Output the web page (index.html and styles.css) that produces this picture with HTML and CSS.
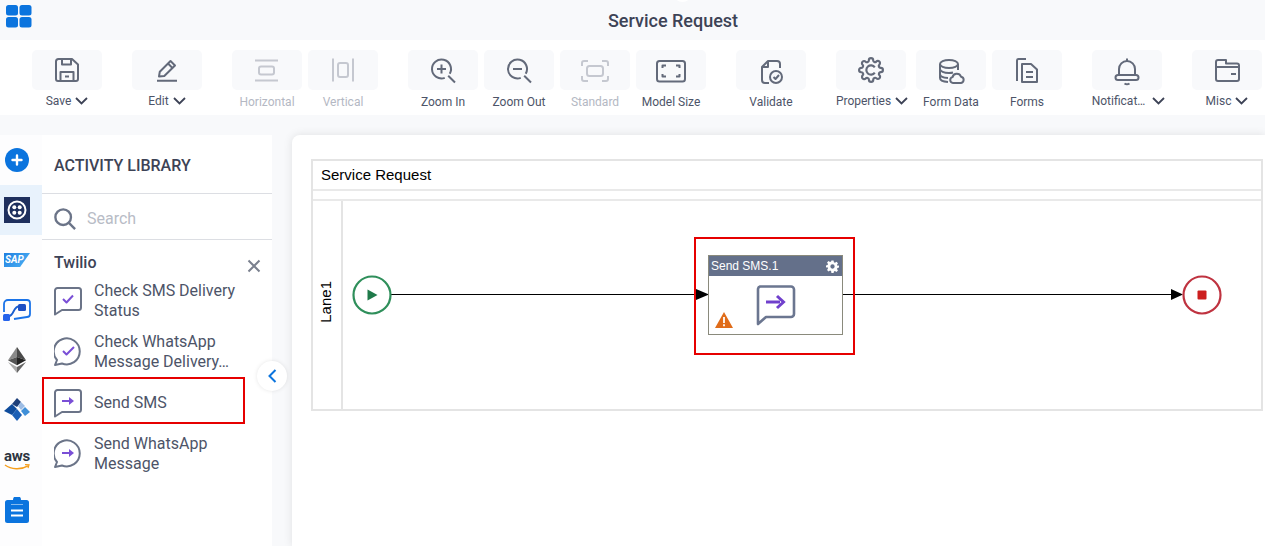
FILE: index.html
```html
<!DOCTYPE html>
<html lang="en">
<head>
    <meta charset="UTF-8">
    <meta name="viewport" content="width=device-width, initial-scale=1.0">
    <title>Service Request</title>
    <link rel="stylesheet" href="styles.css">
</head>
<body>
    <div class="topbar">
        <svg class="apps-icon" width="26" height="23" viewBox="0 0 26 23"><rect x="0" y="0" width="12" height="10.5" rx="2.5"/><rect x="13.5" y="0" width="12" height="10.5" rx="2.5"/><rect x="0" y="12" width="12" height="10.5" rx="2.5"/><rect x="13.5" y="12" width="12" height="10.5" rx="2.5"/></svg>
        <span class="notch"></span>
        <h1>Service Request</h1>
    </div>

    <div class="toolbar">
        <div class="tool-group">
            <div class="tool">
                <div class="tool-btn"><svg class="ico" viewBox="0 0 26 26"><path d="M4.500 2H18l6 5.500V22a2 2 0 0 1-2 2H4a2 2 0 0 1-2-2V4.500A2.500 2.500 0 0 1 4.500 2z"/><path d="M8 2v5.500h9V2M6.500 24v-9h13v9M11 19.500h4"/></svg></div>
                <div class="tool-label drop">Save <svg class="chev" viewBox="0 0 13 8"><path d="M1 1l5.500 5.500L12 1"/></svg></div>
            </div>
        </div>
        <div class="tool-group">
            <div class="tool">
                <div class="tool-btn"><svg class="ico" viewBox="0 0 26 26"><path d="M5 19.500l.8-4.800L16.500 4l4.500 4.500L10.300 19z"/><path d="M14 6.500l4.500 4.500M3 23.800h20"/></svg></div>
                <div class="tool-label drop">Edit <svg class="chev" viewBox="0 0 13 8"><path d="M1 1l5.500 5.500L12 1"/></svg></div>
            </div>
        </div>
        <div class="tool-group">
            <div class="tool off">
                <div class="tool-btn"><svg class="ico" viewBox="0 0 26 26"><path d="M1 3.500h23M1 23.500h23"/><rect x="5" y="9.500" width="15" height="8" rx="2"/></svg></div>
                <div class="tool-label">Horizontal</div>
            </div>
            <div class="tool off">
                <div class="tool-btn"><svg class="ico" viewBox="0 0 26 26"><path d="M3 1.500v23M23 1.500v23"/><rect x="8" y="6" width="10" height="14" rx="2"/></svg></div>
                <div class="tool-label">Vertical</div>
            </div>
        </div>
        <div class="tool-group">
            <div class="tool">
                <div class="tool-btn"><svg class="ico" viewBox="0 0 26 26"><path d="M14.750 20.930A9.500 9.500 0 1 1 19.730 16.750M18.200 18.700l6.800 6.800M11.500 7.500v9M7 12h9"/></svg></div>
                <div class="tool-label">Zoom In</div>
            </div>
            <div class="tool">
                <div class="tool-btn"><svg class="ico" viewBox="0 0 26 26"><path d="M14.750 20.930A9.500 9.500 0 1 1 19.730 16.750M18.200 18.700l6.800 6.800M7 12h9"/></svg></div>
                <div class="tool-label">Zoom Out</div>
            </div>
            <div class="tool off">
                <div class="tool-btn"><svg class="ico" viewBox="0 0 26 26"><path d="M0 9V6a2 2 0 0 1 2-2h4M20 4h4a2 2 0 0 1 2 2v3M26 19v3a2 2 0 0 1-2 2h-4M6 24H2a2 2 0 0 1-2-2v-3"/><rect x="5" y="9" width="16" height="10" rx="2.500"/></svg></div>
                <div class="tool-label">Standard</div>
            </div>
            <div class="tool">
                <div class="tool-btn"><svg class="ico" viewBox="0 0 26 26"><rect x="-1" y="4" width="28" height="20.500" rx="2.500"/><path d="M4.500 11V8.500H8M18 8.500h3.500V11M21.500 17v2.500H18M8 19.500H4.500V17"/></svg></div>
                <div class="tool-label">Model Size</div>
            </div>
        </div>
        <div class="tool-group">
            <div class="tool">
                <div class="tool-btn"><svg class="ico" viewBox="0 0 26 26"><path d="M22 11V7a3 3 0 0 0-3-3h-9L4 10v13a3 3 0 0 0 3 3h4M10 4v6H4"/><circle cx="18" cy="20" r="6"/><path d="M15.500 20l2 2 3.500-4"/></svg></div>
                <div class="tool-label">Validate</div>
            </div>
        </div>
        <div class="tool-group">
            <div class="tool tool-wide">
                <div class="tool-btn"><svg class="ico" viewBox="0 0 24 24"><path d="M19.400 15a1.650 1.650 0 0 0 .33 1.820l.06.06a2 2 0 0 1 0 2.830 2 2 0 0 1-2.830 0l-.06-.06a1.650 1.650 0 0 0-1.820-.33 1.650 1.650 0 0 0-1 1.510V21a2 2 0 0 1-2 2 2 2 0 0 1-2-2v-.09A1.650 1.650 0 0 0 9 19.400a1.650 1.650 0 0 0-1.820.33l-.06.06a2 2 0 0 1-2.830 0 2 2 0 0 1 0-2.830l.06-.06a1.650 1.650 0 0 0 .33-1.820 1.650 1.650 0 0 0-1.510-1H3a2 2 0 0 1-2-2 2 2 0 0 1 2-2h.09A1.650 1.650 0 0 0 4.600 9a1.650 1.650 0 0 0-.33-1.820l-.06-.06a2 2 0 0 1 0-2.830 2 2 0 0 1 2.830 0l.06.06a1.650 1.650 0 0 0 1.820.33H9a1.650 1.650 0 0 0 1-1.510V3a2 2 0 0 1 2-2 2 2 0 0 1 2 2v.09a1.650 1.650 0 0 0 1 1.510 1.650 1.650 0 0 0 1.820-.33l.06-.06a2 2 0 0 1 2.830 0 2 2 0 0 1 0 2.830l-.06.06a1.650 1.650 0 0 0-.33 1.820V9a1.650 1.650 0 0 0 1.510 1H21a2 2 0 0 1 2 2 2 2 0 0 1-2 2h-.09a1.650 1.650 0 0 0-1.510 1z"/><path d="M15.500 9.500a4.300 4.300 0 1 0 0 5"/></svg></div>
                <div class="tool-label drop">Properties <svg class="chev" viewBox="0 0 13 8"><path d="M1 1l5.500 5.500L12 1"/></svg></div>
            </div>
            <div class="tool">
                <div class="tool-btn"><svg class="ico" viewBox="0 0 26 26"><ellipse cx="11" cy="7" rx="9" ry="4"/><path d="M2 7v14c0 2 3 3.600 8 4M20 7v6M2 12c0 2.200 4 4 9 4 1.500 0 3-.2 4-.5M2 17c0 2.200 3.500 3.800 8 4"/><path class="fill" d="M15 26a3 3 0 0 1-.5-5.900 4.500 4.500 0 0 1 8.500-.4A3.200 3.200 0 0 1 23 26z"/></svg></div>
                <div class="tool-label">Form Data</div>
            </div>
            <div class="tool">
                <div class="tool-btn"><svg class="ico" viewBox="0 0 26 26"><path d="M3 24V3.500a1.500 1.500 0 0 1 1.500-1.500H12"/><path d="M8 7h9l6 5.500V25H8z"/><path d="M12 15h7M12 20h7"/></svg></div>
                <div class="tool-label">Forms</div>
            </div>
        </div>
        <div class="tool-group">
            <div class="tool">
                <div class="tool-btn"><svg class="ico" viewBox="0 0 26 26"><path d="M13 1.500v3M5 18v-6a8 8 0 0 1 16 0v6"/><rect x="1.500" y="18" width="23" height="5" rx="2.500"/><path d="M10.500 26.500c1.500 1 3.500 1 5 0"/></svg></div>
                <div class="tool-label drop notif">Notificat… <svg class="chev" viewBox="0 0 13 8"><path d="M1 1l5.500 5.500L12 1"/></svg></div>
            </div>
        </div>
        <div class="tool-group">
            <div class="tool">
                <div class="tool-btn"><svg class="ico" viewBox="0 0 26 26"><path d="M2 10V5a2 2 0 0 1 2-2h8v3.500h11a2 2 0 0 1 2 2V22a2 2 0 0 1-2 2H4a2 2 0 0 1-2-2z"/><path d="M2 10h23M17 17h5"/></svg></div>
                <div class="tool-label drop">Misc <svg class="chev" viewBox="0 0 13 8"><path d="M1 1l5.500 5.500L12 1"/></svg></div>
            </div>
        </div>
    </div>

    <div class="main">
        <div class="rail">
            <div class="rail-item">
                <svg width="24" height="24" viewBox="0 0 24 24"><circle cx="12" cy="12" r="12" fill="#0b74de"/><path d="M12 7.500v9M7.500 12h9" stroke="#fff" stroke-width="2.400" stroke-linecap="round"/></svg>
            </div>
            <div class="rail-item active">
                <svg width="26" height="26" viewBox="0 0 26 26"><rect width="26" height="26" fill="#1e2f5d"/><circle cx="13" cy="13" r="8.500" fill="none" stroke="#fff" stroke-width="2"/><circle cx="10.300" cy="10.300" r="2" fill="#fff"/><circle cx="15.700" cy="10.300" r="2" fill="#fff"/><circle cx="10.300" cy="15.700" r="2" fill="#fff"/><circle cx="15.700" cy="15.700" r="2" fill="#fff"/></svg>
            </div>
            <div class="rail-item">
                <div class="sap">SAP</div>
            </div>
            <div class="rail-item">
                <svg width="30" height="24" viewBox="0 0 30 24" fill="none"><path d="M2 14V6a4 4 0 0 1 4-4h19a3 3 0 0 1 3 3v11a3 3 0 0 1-3 3l-13 2" stroke="#1a73e8" stroke-width="1.800"/><path d="M7 18c5 0 4-10 11-10" stroke="#1a5fd0" stroke-width="2"/><rect x="1" y="16" width="7" height="7" rx="1.500" fill="#2563eb"/><rect x="16" y="6" width="8" height="7" rx="1.500" fill="#1d4fc4"/></svg>
            </div>
            <div class="rail-item">
                <svg width="18" height="26" viewBox="0 0 18 26"><path d="M9 0L0 13.200 9 10z" fill="#8a8a8a"/><path d="M9 0l9 13.200L9 10z" fill="#4a4a4a"/><path d="M0 13.200L9 10v8.200z" fill="#555"/><path d="M18 13.200L9 10v8.200z" fill="#222"/><path d="M0 15l9 11v-6z" fill="#aaa"/><path d="M18 15L9 26v-6z" fill="#666"/></svg>
            </div>
            <div class="rail-item">
                <svg width="26" height="24" viewBox="0 0 26 24"><path d="M0 13l8-7 5 5-5 6z" fill="#0f4c9c"/><path d="M8 17l5-6 5 6-5 6z" fill="#1b5fb5"/><path d="M8 6l5-6 4 4-4 5z" fill="#1d3f7a"/><path d="M17 4l4 4-4 4-3-4z" fill="#9dbce4"/><path d="M21 9l5 5-5 4-4-5z" fill="#3f8fd8"/></svg>
            </div>
            <div class="rail-item">
                <div class="aws">
                    <span>aws</span>
                    <svg width="26" height="7" viewBox="0 0 26 7" fill="none"><path d="M1 1c6 4.500 16 5 23 .8" stroke="#f59e1b" stroke-width="1.500"/><path d="M21 .6l4 .2-1 3.400" stroke="#f59e1b" stroke-width="1.200"/></svg>
                </div>
            </div>
            <div class="rail-item">
                <svg width="24" height="26" viewBox="0 0 24 26"><path d="M2.500 3H8a4 4 0 0 1 8 0h5.500A2.500 2.500 0 0 1 24 5.500v18a2.500 2.500 0 0 1-2.500 2.500h-19A2.500 2.500 0 0 1 0 23.500v-18A2.500 2.500 0 0 1 2.500 3z" fill="#0b74de"/><path d="M6 7.500h12" stroke="#fff" stroke-width="1" opacity=".5"/><path d="M6 13.500h12M6 18.500h12" stroke="#fff" stroke-width="2.200"/></svg>
            </div>
        </div>

        <div class="library">
            <div class="library-head">ACTIVITY LIBRARY</div>
            <div class="search">
                <svg width="22" height="22" viewBox="0 0 24 24" fill="none" stroke="#6b7488" stroke-width="2.600"><circle cx="10" cy="10" r="8.500"/><path d="M16 16l7 7"/></svg>
                <span>Search</span>
            </div>
            <div class="group-head">
                <span>Twilio</span>
                <svg width="14" height="14" viewBox="0 0 14 14" stroke="#7a808e" stroke-width="2"><path d="M1.500 1.500l11 11M12.500 1.500l-11 11"/></svg>
            </div>
            <div class="items">
                <div class="item">
                    <svg class="bubble" viewBox="0 0 28 30"><path d="M3.500 2h21A2.500 2.500 0 0 1 27 4.500v17a2.500 2.500 0 0 1-2.500 2.500H8l-7 4.500V4.500A2.500 2.500 0 0 1 3.500 2z"/><path class="accent" d="M9 13l3.500 3.500L19 9.500"/></svg>
                    <span>Check SMS Delivery Status</span>
                </div>
                <div class="item">
                    <svg class="bubble" viewBox="0 0 28 30"><path d="M3 23A13 13 0 1 1 8 26.500L1 28z"/><path class="accent" d="M9 14l3.500 3.500L20 10"/></svg>
                    <span>Check WhatsApp Message Delivery…</span>
                </div>
                <div class="item picked">
                    <svg class="bubble" viewBox="0 0 28 30"><path d="M3.500 2h21A2.500 2.500 0 0 1 27 4.500v17a2.500 2.500 0 0 1-2.500 2.500H8l-7 4.500V4.500A2.500 2.500 0 0 1 3.500 2z"/><path class="accent" d="M8 13h10"/><path class="accent-head" d="M15 9l5 4-5 4z"/></svg>
                    <span>Send SMS</span>
                </div>
                <div class="item">
                    <svg class="bubble" viewBox="0 0 28 30"><path d="M3 23A13 13 0 1 1 8 26.500L1 28z"/><path class="accent" d="M8 14h10"/><path class="accent-head" d="M15 10l5 4-5 4z"/></svg>
                    <span>Send WhatsApp Message</span>
                </div>
            </div>
            <div class="collapse-btn">
                <svg width="9" height="14" viewBox="0 0 9 14" fill="none" stroke="#0b74de" stroke-width="2"><path d="M7.500 1L1.500 7l6 6"/></svg>
            </div>
        </div>

        <div class="canvas">
            <div class="pool">
                <div class="pool-title">Service Request</div>
                <div class="pool-gap"></div>
                <div class="lane">
                    <div class="lane-label"><span>Lane1</span></div>
                    <div class="lane-body">
                        <svg class="wires" width="920" height="208">
                            <path d="M47 93.500H354M500 93.500H829" stroke="#000" fill="none"/>
                            <path d="M353 88l13 5.500-13 5.500zM828 88l12 5.500-12 5.500z" fill="#000"/>
                        </svg>
                        <div class="event start">
                            <svg width="40" height="40" viewBox="0 0 40 40"><circle cx="20" cy="20" r="18.500" fill="#fff" stroke="#2f8f5b" stroke-width="2.200"/><path d="M15.500 14.500l10 5.500-10 5.500z" fill="#1f7a4a"/></svg>
                        </div>
                        <div class="task">
                            <div class="task-head">
                                <span>Send SMS.1</span>
                                <svg width="13" height="13" viewBox="0 0 24 24"><path fill="#fff" fill-rule="evenodd" d="M10 1h4l.6 3.200 2 .8L19.300 3.200l2.800 2.800L20.300 8.700l.8 2L24 10v4l-2.900.6-.8 2 1.800 2.700-2.800 2.800-2.700-1.800-2 .8L14 24h-4l-.6-3.900-2-.8-2.700 1.800-2.800-2.800 1.800-2.700-.8-2L0 14v-4l2.900-.6.8-2L1.900 4.700 4.700 1.900l2.700 1.800 2-.8zM12 8a4 4 0 1 0 0 8 4 4 0 0 0 0-8z"/></svg>
                            </div>
                            <div class="task-body">
                                <svg class="task-icon" width="40" height="42" viewBox="0 0 40 42" fill="none"><path d="M4 1.500h31a3 3 0 0 1 3 3V29a3 3 0 0 1-3 3H10l-8 7V4a3 3 0 0 1 2-2.500z" stroke="#6b7690" stroke-width="2.600" stroke-linejoin="round"/><path d="M10 17h14" stroke="#7040cc" stroke-width="3"/><path d="M21 11l6.500 6-6.500 6" stroke="#7040cc" stroke-width="3"/></svg>
                                <svg class="task-warn" width="18" height="16" viewBox="0 0 18 16"><path d="M9 0l9 16H0z" fill="#e06c1a"/><path d="M9 5v6M9 12.200v2" stroke="#fff" stroke-width="1.800"/></svg>
                            </div>
                        </div>
                        <div class="task-mark"></div>
                        <div class="event end">
                            <svg width="40" height="40" viewBox="0 0 40 40"><circle cx="20" cy="20" r="18.500" fill="#fff" stroke="#bf3340" stroke-width="2.200"/><rect x="15.500" y="15.500" width="9" height="9" rx="1" fill="#cc1f1f"/></svg>
                        </div>
                    </div>
                </div>
            </div>
        </div>
    </div>
</body>
</html>
```

FILE: styles.css
```css
* { margin: 0; padding: 0; box-sizing: border-box; }
html, body { height: 100%; overflow: hidden; }
body {
    font-family: 'Roboto', sans-serif;
    background: #f8f9fb;
    color: #4d5468;
    display: flex;
    flex-direction: column;
}
.topbar {
    height: 40px;
    flex: none;
    display: flex;
    align-items: center;
    justify-content: center;
    position: relative;
    background: #f8f9fb;
    padding-left: 81px;
}
.topbar h1 { font-size: 18px; font-weight: 500; color: #3d4356; }
.apps-icon { position: absolute; left: 6px; top: 5px; fill: #0b74de; }
.notch {
    position: absolute;
    left: 673px;
    top: -17px;
    width: 19px;
    height: 19px;
    border-radius: 50%;
    background: #fff;
}

/* toolbar */
.toolbar {
    height: 75px;
    flex: none;
    background: #fff;
    display: flex;
    gap: 30px;
    padding: 10px 0 0 32px;
}
.tool-group { display: flex; gap: 6px; }
.tool { width: 70px; display: flex; flex-direction: column; align-items: center; }
.tool-wide { margin-right: 4px; }
.tool-btn {
    width: 70px;
    height: 40px;
    background: #f8f9fb;
    border-radius: 5px;
    display: flex;
    align-items: center;
    justify-content: center;
}
.ico {
    width: 26px;
    height: 26px;
    overflow: visible;
    fill: none;
    stroke: #636a7a;
    stroke-width: 2;
    stroke-linejoin: round;
}
.ico .fill { fill: #f8f9fb; }
.tool-label {
    font-size: 12px;
    line-height: 16px;
    margin-top: 4px;
    white-space: nowrap;
    color: #4d5468;
}
.tool-label.drop {
    margin-top: 3px;
    display: flex;
    align-items: center;
    gap: 4px;
}
.tool-wide .tool-label { margin-left: 2px; }
.tool-label.notif { gap: 7px; margin-left: 3px; }
.off .ico { stroke: #c5c8d0; }
.off .tool-label { color: #b4b8c3; }
.chev { width: 13px; height: 8px; fill: none; stroke: #3d4356; stroke-width: 1.800; }

/* main area */
.main { flex: 1; display: flex; min-height: 0; padding-top: 20px; }
.rail {
    width: 42px;
    flex: none;
    margin-top: -20px;
    padding-top: 20px;
    background: linear-gradient(#f8f9fb 20px, #fdfdfe 20px);
}
.rail-item { height: 50px; display: flex; align-items: center; justify-content: center; padding-right: 8px; }
.rail-item.active { background: #e8f2fc; }
.sap {
    width: 26px;
    height: 14px;
    background: linear-gradient(135deg, #1f7fe0, #4fb3f5);
    clip-path: polygon(0 0, 100% 0, 62% 100%, 0 100%);
    color: #fff;
    font-size: 10px;
    font-weight: 700;
    font-style: italic;
    line-height: 14px;
    padding-left: 1px;
}
.aws { display: flex; flex-direction: column; align-items: center; line-height: 13px; }
.aws span { font-size: 15px; font-weight: 700; color: #2d3440; letter-spacing: -.2px; }
.aws svg { margin-top: 1px; }

/* library */
.library { width: 230px; flex: none; background: #fff; position: relative; }
.library-head {
    height: 59px;
    padding: 2px 12px 0;
    display: flex;
    align-items: center;
    font-size: 16px;
    font-weight: 500;
    color: #3d4356;
    border-bottom: 1px solid #dcdee3;
}
.search {
    height: 46px;
    padding: 4px 12px 0;
    display: flex;
    align-items: center;
    gap: 11px;
    font-size: 16px;
    color: #b8bcc6;
    border-bottom: 1px solid #dcdee3;
}
.group-head {
    display: flex;
    justify-content: space-between;
    align-items: center;
    padding: 10px 11px 0 12px;
    font-size: 16px;
    font-weight: 500;
    color: #3d4356;
    height: 34px;
}
.group-head svg { margin-top: 7px; }
.items { display: flex; flex-direction: column; gap: 11px; padding: 7px 0 0 12px; width: 203px; }
.item {
    min-height: 40px;
    display: flex;
    align-items: center;
    gap: 12px;
    font-size: 16px;
    line-height: 20px;
    color: #4d5468;
    position: relative;
}
.item span { width: 151px; }
.bubble {
    width: 28px;
    height: 30px;
    flex: none;
    fill: none;
    stroke: #6b7488;
    stroke-width: 2;
    stroke-linejoin: round;
}
.bubble .accent { stroke: #7a4fd6; }
.bubble .accent-head { fill: #7a4fd6; stroke: none; }
.item.picked::after {
    content: "";
    position: absolute;
    left: -12px;
    top: -6px;
    right: 0;
    bottom: -1px;
    border: 2px solid #e60000;
}
.collapse-btn {
    position: absolute;
    left: 215px;
    top: 226px;
    width: 30px;
    height: 30px;
    border-radius: 50%;
    background: #fff;
    box-shadow: 0 0 4px rgba(0,0,0,0.1);
    display: flex;
    align-items: center;
    justify-content: center;
}

/* canvas */
.canvas {
    flex: 1;
    margin-left: 20px;
    background: #fff;
    border-radius: 8px 0 0 0;
    box-shadow: 0 0 10px rgba(0,0,0,0.1);
    padding: 24px 2px 0 19px;
    font-family: 'Liberation Sans', Arial, sans-serif;
    color: #000;
}
.pool { height: 252px; border: 2px solid #e4e4e4; display: flex; flex-direction: column; }
.pool-title { height: 30px; line-height: 28px; padding-left: 8px; font-size: 15px; border-bottom: 2px solid #e9e9e9; flex: none; }
.pool-gap { height: 10px; border-bottom: 2px solid #e9e9e9; flex: none; }
.lane { flex: 1; display: flex; }
.lane-label {
    width: 30px;
    flex: none;
    border-right: 2px solid #e4e4e4;
    display: flex;
    align-items: center;
    justify-content: center;
    padding-right: 3px;
}
.lane-label span {
    writing-mode: vertical-rl;
    transform: rotate(180deg);
    font-size: 15px;
    margin-bottom: 7px;
}
.lane-body { flex: 1; position: relative; }
.wires { position: absolute; left: 0; top: 0; }
.event { position: absolute; top: 74px; width: 40px; height: 40px; }
.event.start { left: 9px; }
.event.end { left: 839px; }
.task {
    position: absolute;
    left: 365px;
    top: 54px;
    width: 135px;
    height: 80px;
    background: #fff;
    border: 1px solid #8a8a7c;
    display: flex;
    flex-direction: column;
}
.task-head {
    height: 20px;
    background: #64708a;
    color: #fff;
    font-size: 12px;
    display: flex;
    align-items: center;
    justify-content: space-between;
    padding: 0 3px 0 2px;
}
.task-body { flex: 1; position: relative; }
.task-icon { position: absolute; left: 47px; top: 9px; }
.task-warn { position: absolute; left: 6px; top: 36px; }
.task-mark {
    position: absolute;
    left: 351px;
    top: 36px;
    width: 161px;
    height: 118px;
    border: 2px solid #e60000;
}
```
